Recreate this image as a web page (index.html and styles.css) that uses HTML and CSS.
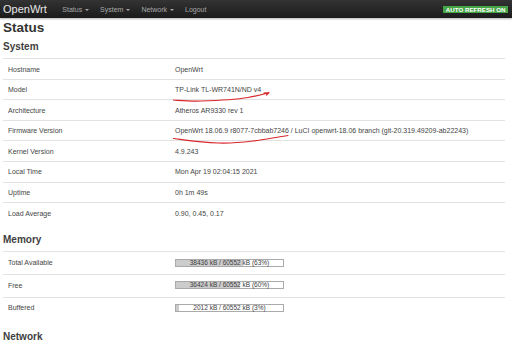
FILE: index.html
```html
<!DOCTYPE html>
<html>
<head>
  <meta charset="utf-8">
  <title>OpenWrt - Status</title>
  <link rel="stylesheet" href="styles.css">
</head>
<body>
<header class="topbar">
  <a class="brand" href="#">OpenWrt</a>
  <ul class="nav">
    <li>Status <span class="caret"></span></li>
    <li>System <span class="caret"></span></li>
    <li>Network <span class="caret"></span></li>
    <li>Logout</li>
  </ul>
  <span class="badge">AUTO REFRESH ON</span>
</header>

<div class="main">
  <h2>Status</h2>

  <h3>System</h3>
  <div class="table">
    <div class="tr"><div class="td left">Hostname</div><div class="td">OpenWrt</div></div>
    <div class="tr"><div class="td left">Model</div>
      <div class="td mark">TP-Link TL-WR741N/ND v4
        <svg class="scribble model" width="110" height="16" viewBox="0 0 110 16">
          <path d="M0 11 C 8 11.5, 18 12.5, 28 12 C 45 11.5, 60 11, 75 8.5 C 84 7, 90 5.5, 96 3.5 M96 3.5 L 91 4 M96 3.5 L 93.5 6" />
        </svg>
      </div>
    </div>
    <div class="tr"><div class="td left">Architecture</div><div class="td">Atheros AR9330 rev 1</div></div>
    <div class="tr"><div class="td left">Firmware Version</div>
      <div class="td mark">OpenWrt 18.06.9 r8077-7cbbab7246 / LuCI openwrt-18.06 branch (git-20.319.49209-ab22243)
        <svg class="scribble firmware" width="130" height="16" viewBox="0 0 130 16">
          <path d="M0 5.5 C 12 7, 28 9.5, 45 10 C 58 10.5, 68 9.5, 80 8 C 92 6.5, 104 4, 115 2.5" />
        </svg>
      </div>
    </div>
    <div class="tr"><div class="td left">Kernel Version</div><div class="td">4.9.243</div></div>
    <div class="tr"><div class="td left">Local Time</div><div class="td">Mon Apr 19 02:04:15 2021</div></div>
    <div class="tr"><div class="td left">Uptime</div><div class="td">0h 1m 49s</div></div>
    <div class="tr"><div class="td left">Load Average</div><div class="td">0.90, 0.45, 0.17</div></div>
  </div>

  <h3>Memory</h3>
  <div class="table memory">
    <div class="tr"><div class="td left">Total Available</div>
      <div class="td"><div class="bar"><div class="fill" style="width: 63%"></div><span>38436 kB / 60552 kB (63%)</span></div></div>
    </div>
    <div class="tr"><div class="td left">Free</div>
      <div class="td"><div class="bar"><div class="fill" style="width: 60%"></div><span>36424 kB / 60552 kB (60%)</span></div></div>
    </div>
    <div class="tr"><div class="td left">Buffered</div>
      <div class="td"><div class="bar"><div class="fill" style="width: 3%"></div><span>2012 kB / 60552 kB (3%)</span></div></div>
    </div>
  </div>

  <h3>Network</h3>
</div>
</body>
</html>
```

FILE: styles.css
```css
/* base */
body {
  margin: 0;
  font-family: "Liberation Sans", Arial, sans-serif;
  font-size: 7px;
  color: #454545;
  background: #fff;
}

/* top bar */
.topbar {
  display: flex;
  align-items: center;
  height: 18px;
  background: linear-gradient(#333, #1b1b1b);
  box-shadow: 0 1px 2px rgba(0,0,0,0.3);
}
.brand {
  padding-left: 3px;
  font-size: 11px;
  color: #e8e8e8;
  text-decoration: none;
}
.nav {
  display: flex;
  list-style: none;
  margin: 0 0 0 10px;
  padding: 0;
}
.nav li {
  padding: 0 5.5px;
  color: #a8a8a8;
  font-size: 7px;
}
.caret {
  display: inline-block;
  width: 0;
  height: 0;
  margin-left: 1px;
  vertical-align: middle;
  border-top: 2.5px solid #a8a8a8;
  border-left: 2px solid transparent;
  border-right: 2px solid transparent;
}
.badge {
  margin-left: auto;
  margin-right: 4px;
  padding: 0 2.5px;
  background: #46a546;
  color: #fff;
  font-size: 6.2px;
  font-weight: bold;
  line-height: 7px;
}

/* content */
.main {
  padding: 0 7px 0 3px;
}
h2 {
  margin: 2px 0 0;
  font-size: 13.5px;
  line-height: 16px;
  color: #333;
}
h3 {
  margin: 5px 0 5px;
  font-size: 10px;
  line-height: 12px;
  color: #404040;
}
.table + h3 {
  margin-top: 11.5px;
}
.tr {
  display: flex;
  align-items: center;
  border-top: 1px solid #e2e2e2;
  padding: 6.5px 0 5.5px;
}
.td {
  padding: 0 5px;
  line-height: 7.6px;
}
.td.left {
  width: 157px;
  flex: none;
}
.mark {
  position: relative;
}
.scribble {
  position: absolute;
  fill: none;
  stroke: #d9262a;
  stroke-width: 1.2;
  stroke-linecap: round;
}
.scribble.model {
  left: 3px;
  top: 3px;
}
.scribble.firmware {
  left: 3px;
  top: 6px;
}

/* memory bars */
.memory .tr {
  padding: 6.5px 0 7.2px;
}
.bar {
  position: relative;
  width: 107px;
  height: 6px;
  border: 1px solid #aaa;
  background: #fff;
}
.fill {
  height: 100%;
  background: #ccc;
}
.bar span {
  position: absolute;
  left: 0;
  right: 0;
  top: -1px;
  text-align: center;
  font-size: 6.5px;
  line-height: 8px;
  color: #404040;
}
```
